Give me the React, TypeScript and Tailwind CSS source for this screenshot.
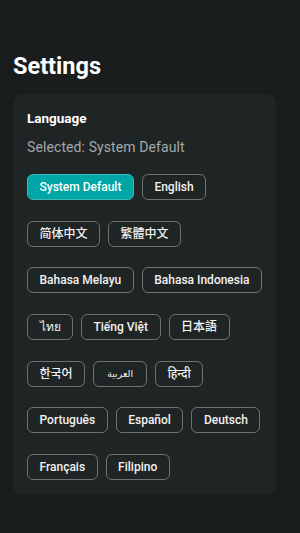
import React from "react";

const langs = [
  ["System Default", "English"],
  ["简体中文", "繁體中文"],
  ["Bahasa Melayu", "Bahasa Indonesia"],
  ["ไทย", "Tiếng Việt", "日本語"],
  ["한국어", "العربية", "हिन्दी"],
  ["Português", "Español", "Deutsch"],
  ["Français", "Filipino"],
];

export default function App() {
  return (
    <div
      className="min-h-[533px] w-[300px] bg-[#1a1d1d] pl-[13px] pr-[24px] pt-[50px] pb-[38px]"
      style={{ fontFamily: "Roboto, 'Noto Sans', 'Noto Sans CJK SC', 'DejaVu Sans', sans-serif" }}
    >
      <h1 className="text-[23.5px] leading-[32px] font-bold text-white">Settings</h1>
      <div className="mt-[12px] rounded-[9px] bg-[#1f2424] px-[14px] pt-[15px] pb-[15px]">
        <div className="text-[13.5px] leading-[18px] font-bold text-white">Language</div>
        <div className="mt-[11px] text-[14px] leading-[18px] tracking-[0.1px] text-[#a4a8a8]">
          Selected: System Default
        </div>
        <div className="mt-[18px] flex flex-col gap-y-[20.7px]">
          {langs.map((row, i) => (
            <div key={i} className="flex gap-x-[8px]">
              {row.map((l) => {
                const sel = l === "System Default";
                const ar = l === "العربية";
                return (
                  <div
                    key={l}
                    className={
                      "h-[26px] flex items-center justify-center rounded-[6px] border " +
                      (sel
                        ? "px-[11.5px] bg-[#00a6a6] border-[#3fb8b8] text-white font-medium text-[12px]"
                        : "border-[#6d7171] text-[#f2f2f2] " +
                          (ar ? "w-[54px] font-normal text-[9.5px]" : "px-[11.5px] font-medium text-[12px]"))
                    }
                  >
                    {l}
                  </div>
                );
              })}
            </div>
          ))}
        </div>
      </div>
    </div>
  );
}
